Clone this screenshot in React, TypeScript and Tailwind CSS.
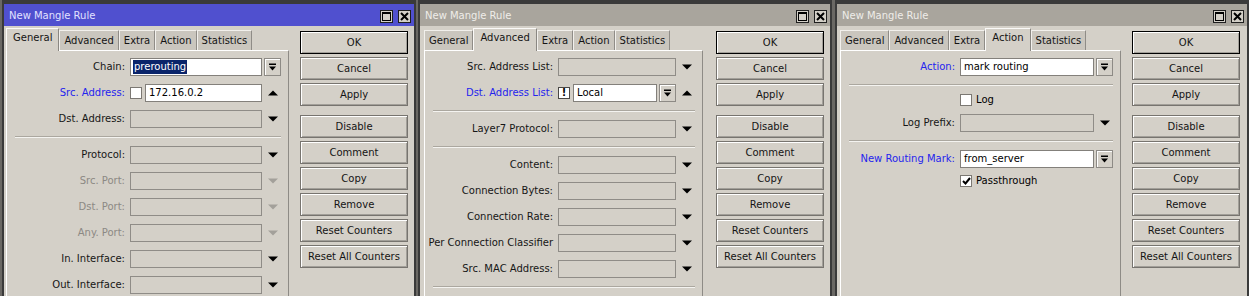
import React from 'react';

type Tone = 'normal' | 'blue' | 'gray';

const labelTone: Record<Tone, string> = {
  normal: 'text-[#161616]',
  blue: 'text-[#2424ee]',
  gray: 'text-[#8c8984]',
};

const tabNames = ['General', 'Advanced', 'Extra', 'Action', 'Statistics'];

const buttons = ['OK', 'Cancel', 'Apply', 'Disable', 'Comment', 'Copy', 'Remove', 'Reset Counters', 'Reset All Counters'];

function Tri({ up, dim }: { up?: boolean; dim?: boolean }) {
  return (
    <svg width="10" height="6" viewBox="0 0 10 6" className={dim ? 'fill-[#a3a09a]' : 'fill-black'}>
      <polygon points={up ? '0,5.5 10,5.5 5,0.5' : '0,0.5 10,0.5 5,5.5'} />
    </svg>
  );
}

const Arrow = ({ up, dim }: { up?: boolean; dim?: boolean }) => (
  <div className="pl-[6px] flex items-center">
    <Tri up={up} dim={dim} />
  </div>
);

function DropBox() {
  return (
    <div className="w-[17px] h-[18px] shrink-0 flex items-center justify-center border border-[#8d8a85] bg-[#d4d0c8] shadow-[inset_1px_1px_0_#fff]">
      <svg width="9" height="9" viewBox="0 0 9 9" className="fill-black">
        <rect x="1" y="0.5" width="7" height="1.5" />
        <polygon points="1,3.5 8,3.5 4.5,7.5" />
      </svg>
    </div>
  );
}

const Slot = ({ children }: { children?: React.ReactNode }) => (
  <div className="pl-[2px] flex items-center">{children}</div>
);

function TextBox({ value, selected }: { value?: string; selected?: boolean }) {
  return (
    <div className="flex-1 min-w-0 h-[18px] bg-white border border-[#83807b] flex items-center pl-[2px] text-black whitespace-nowrap">
      {selected ? <span className="bg-[#0a246a] text-white px-px leading-[14px]">{value}</span> : <span className="pl-px">{value}</span>}
    </div>
  );
}

const Blank = () => <div className="flex-1 min-w-0 h-[18px] border border-[#8f8c87]" />;

function Check({ checked }: { checked?: boolean }) {
  return (
    <div className="w-[12px] h-[12px] shrink-0 bg-white border border-[#7b7873] flex items-center justify-center">
      {checked && (
        <svg width="9" height="8" viewBox="0 0 9 8">
          <polyline points="1,4 3.5,6.5 8,1" fill="none" stroke="black" strokeWidth="2" />
        </svg>
      )}
    </div>
  );
}

function Row({
  label,
  tone = 'normal',
  lw,
  field,
  slot,
}: {
  label: string;
  tone?: Tone;
  lw: string;
  field: React.ReactNode;
  slot?: React.ReactNode;
}) {
  return (
    <div className="flex items-center h-[18px]">
      <div className={`${lw} shrink-0 text-right whitespace-nowrap ${labelTone[tone]}`}>{label}</div>
      <div className="flex-1 min-w-0 ml-[5px] flex items-center h-full">{field}</div>
      <div className="w-[19px] shrink-0 flex items-center h-full">{slot}</div>
    </div>
  );
}

function CheckRow({ lw, label, checked }: { lw: string; label: string; checked?: boolean }) {
  return (
    <div className="flex items-center h-[12px]">
      <div className={`${lw} shrink-0`} />
      <div className="ml-[5px] flex items-center gap-[4px] text-black whitespace-nowrap">
        <Check checked={checked} />
        <span>{label}</span>
      </div>
    </div>
  );
}

const Sep = () => <div className="h-[2px] ml-[8px] border-t border-[#aba79f] border-b border-b-[#f4f3f0]" />;

function TitleBtn({ kind }: { kind: 'max' | 'close' }) {
  return (
    <div className="w-[13px] h-[13px] bg-[#d4d0c8] border border-[#1e1e1e] flex items-center justify-center">
      {kind === 'max' ? (
        <svg width="9" height="9" viewBox="0 0 9 9">
          <rect x="0.5" y="0.5" width="8" height="8" fill="none" stroke="black" />
          <rect x="0" y="0" width="9" height="2" fill="black" />
        </svg>
      ) : (
        <svg width="9" height="9" viewBox="0 0 9 9">
          <path d="M1 1 L8 8 M8 1 L1 8" stroke="black" strokeWidth="2" />
        </svg>
      )}
    </div>
  );
}

function Dialog({
  active,
  tab,
  outer,
  bodyPl,
  panelW,
  btnMl,
  children,
}: {
  active?: boolean;
  tab: number;
  outer: string;
  bodyPl: string;
  panelW: string;
  btnMl: string;
  children: React.ReactNode;
}) {
  return (
    <div className={`${outer} w-[414px] h-[340px] shrink-0 border-2 border-[#3a3a3a] bg-[#3a3a3a] pt-[2px] flex flex-col`}>
      {/* Title bar */}
      <div
        className={`h-[22px] shrink-0 flex items-center justify-between pl-[5px] pr-[3px] pt-[2px] ${
          active ? 'bg-[#5050cf] text-[#e2e2ff]' : 'bg-[#a9a59d] text-[#efede9]'
        }`}
      >
        <span>New Mangle Rule</span>
        <div className="flex gap-[5px]">
          <TitleBtn kind="max" />
          <TitleBtn kind="close" />
        </div>
      </div>

      {/* Body */}
      <div className={`flex-1 bg-[#d4d0c8] flex ${bodyPl}`}>
        <div className={`${panelW} shrink-0 flex flex-col`}>
          <div className="h-[24px] flex items-end">
            {tabNames.map((t, i) =>
              i === tab ? (
                <div
                  key={t}
                  className="relative z-10 h-[23px] -mb-px px-[6px] pb-[4px] flex items-center bg-[#d4d0c8] border-l border-t border-[#fbfaf8] border-r border-r-[#8a8782] text-[#141414]"
                >
                  {t}
                </div>
              ) : (
                <div
                  key={t}
                  className="h-[20px] px-[4px] flex items-center bg-[#cac6be] border-l border-t border-[#f2f0ec] border-r border-r-[#8f8c87] text-[#141414]"
                >
                  {t}
                </div>
              )
            )}
          </div>
          <div className="flex-1 border-l border-t border-white border-r border-r-[#8e8b86] pt-[7px] pr-[7px] flex flex-col gap-[8px]">
            {children}
          </div>
        </div>

        <div className={`${btnMl} w-[108px] pt-[5px] flex flex-col gap-[3px]`}>
          {buttons.map((b, i) => (
            <div
              key={b}
              className={`h-[23px] flex items-center justify-center border shadow-[inset_1px_1px_0_#fff,inset_-1px_-1px_0_#a29f99] text-[#141414] ${
                i === 0 ? 'border-black' : 'border-[#77746f]'
              } ${i === 3 ? 'mt-[6px]' : ''}`}
            >
              {b}
            </div>
          ))}
        </div>
      </div>
    </div>
  );
}

export default function App() {
  return (
    <div className="w-[1249px] h-[296px] overflow-hidden bg-[#6a6864] flex font-['DejaVu_Sans',sans-serif] text-[10px] leading-none">
      <Dialog active tab={0} outer="ml-[2px]" bodyPl="pl-[2px]" panelW="w-[283px]" btnMl="ml-[11px]">
        <Row lw="w-[118px]" label="Chain:" field={<TextBox value="prerouting" selected />} slot={<Slot><DropBox /></Slot>} />
        <Row
          lw="w-[118px]"
          label="Src. Address:"
          tone="blue"
          field={
            <div className="flex-1 flex items-center gap-[3px]">
              <Check />
              <TextBox value="172.16.0.2" />
            </div>
          }
          slot={<Arrow up />}
        />
        <Row lw="w-[118px]" label="Dst. Address:" field={<Blank />} slot={<Arrow />} />
        <Sep />
        <Row lw="w-[118px]" label="Protocol:" field={<Blank />} slot={<Arrow />} />
        <Row lw="w-[118px]" label="Src. Port:" tone="gray" field={<Blank />} slot={<Arrow dim />} />
        <Row lw="w-[118px]" label="Dst. Port:" tone="gray" field={<Blank />} slot={<Arrow dim />} />
        <Row lw="w-[118px]" label="Any. Port:" tone="gray" field={<Blank />} slot={<Arrow dim />} />
        <Row lw="w-[118px]" label="In. Interface:" field={<Blank />} slot={<Arrow />} />
        <Row lw="w-[118px]" label="Out. Interface:" field={<Blank />} slot={<Arrow />} />
      </Dialog>

      <Dialog tab={1} outer="ml-[2px]" bodyPl="pl-[4px]" panelW="w-[279px]" btnMl="ml-[13px]">
        <Row lw="w-[128px]" label="Src. Address List:" field={<Blank />} slot={<Arrow />} />
        <Row
          lw="w-[128px]"
          label="Dst. Address List:"
          tone="blue"
          field={
            <div className="flex-1 min-w-0 flex items-center">
              <div className="w-[12px] h-[12px] shrink-0 bg-white border border-[#4a4845] flex items-center justify-center font-bold text-black text-[10px]">
                !
              </div>
              <div className="flex-1 min-w-0 ml-[3px] flex">
                <TextBox value="Local" />
              </div>
              <div className="ml-[2px]">
                <DropBox />
              </div>
            </div>
          }
          slot={<Arrow up />}
        />
        <Sep />
        <Row lw="w-[128px]" label="Layer7 Protocol:" field={<Blank />} slot={<Arrow />} />
        <Sep />
        <Row lw="w-[128px]" label="Content:" field={<Blank />} slot={<Arrow />} />
        <Row lw="w-[128px]" label="Connection Bytes:" field={<Blank />} slot={<Arrow />} />
        <Row lw="w-[128px]" label="Connection Rate:" field={<Blank />} slot={<Arrow />} />
        <Row lw="w-[128px]" label="Per Connection Classifier" field={<Blank />} slot={<Arrow />} />
        <Row lw="w-[128px]" label="Src. MAC Address:" field={<Blank />} slot={<Arrow />} />
        <Sep />
      </Dialog>

      <Dialog tab={3} outer="ml-[3px]" bodyPl="pl-[3px]" panelW="w-[281px]" btnMl="ml-[11px]">
        <Row lw="w-[114px]" label="Action:" tone="blue" field={<TextBox value="mark routing" />} slot={<Slot><DropBox /></Slot>} />
        <Sep />
        <CheckRow lw="w-[114px]" label="Log" />
        <Row lw="w-[114px]" label="Log Prefix:" field={<Blank />} slot={<Arrow />} />
        <Sep />
        <Row lw="w-[114px]" label="New Routing Mark:" tone="blue" field={<TextBox value="from_server" />} slot={<Slot><DropBox /></Slot>} />
        <div className="-mt-px">
          <CheckRow lw="w-[114px]" label="Passthrough" checked />
        </div>
      </Dialog>
    </div>
  );
}
